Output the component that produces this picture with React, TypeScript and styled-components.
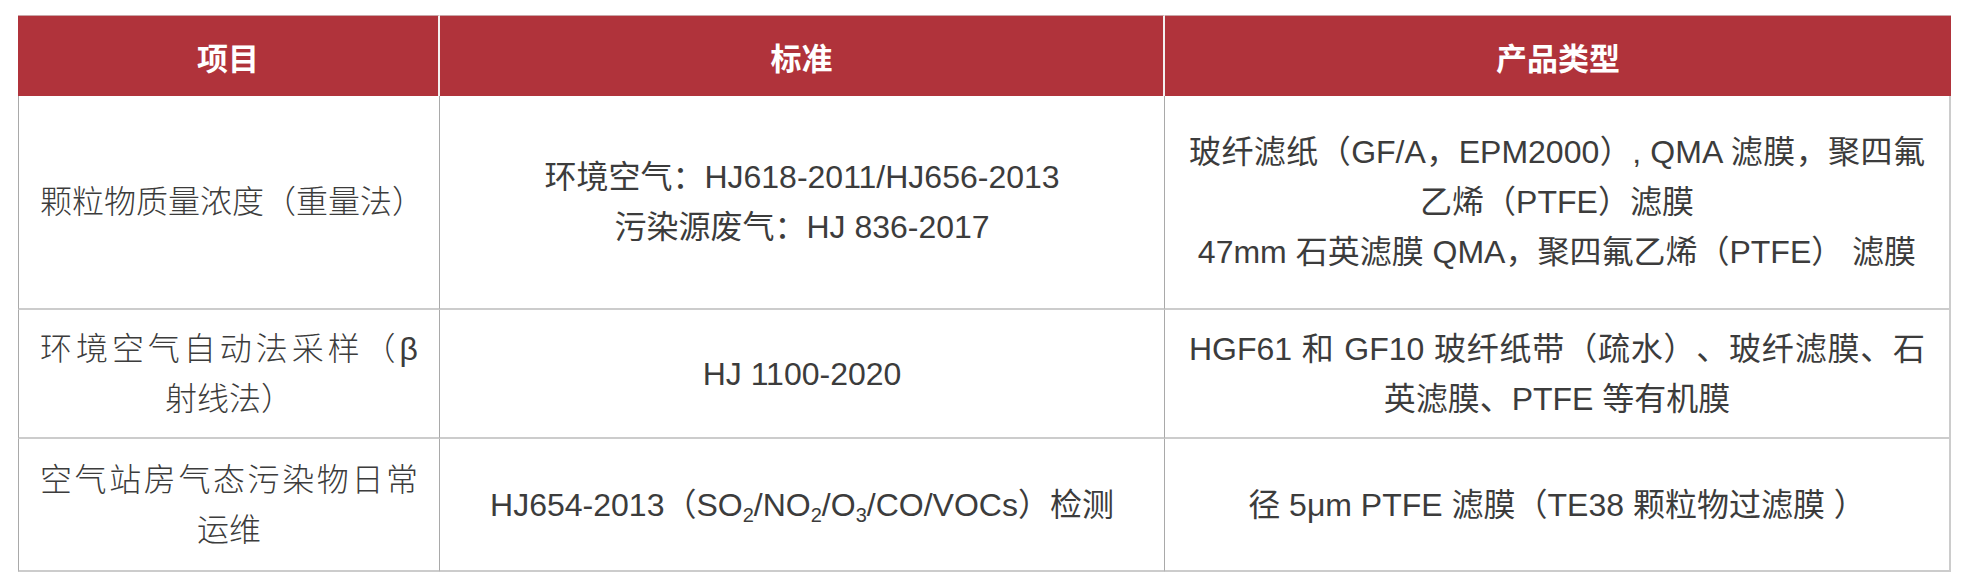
import React from "react";
import styled, { createGlobalStyle, css } from "styled-components";

const GlobalStyle = createGlobalStyle`
  html, body {
    margin: 0;
    padding: 0;
    background: #ffffff;
  }
  body {
    font-family: "Liberation Sans", "Noto Sans CJK SC", sans-serif;
  }
`;

const Table = styled.div`
  display: grid;
  grid-template-columns: 422px 725px 786px;
  grid-template-rows: 81px 214px 129px 133px;
  margin: 15px 0 0 18px;
  width: 1933px;
  font-family: "Liberation Sans", "Noto Sans CJK SC", sans-serif;
  text-spacing-trim: space-all;
`;

const HeadCell = styled.div<{ $last?: boolean }>`
  box-sizing: border-box;
  background: #b0333b;
  color: #ffffff;
  font-weight: 700;
  font-size: 31px;
  display: flex;
  align-items: center;
  justify-content: center;
  border-top: 1px solid #c9a5a7;
  border-right: ${(p) => (p.$last ? "none" : "2px solid #f4f0f0")};
`;

const Cell = styled.div<{ $col: number; $pad: number }>`
  box-sizing: border-box;
  display: flex;
  flex-direction: column;
  justify-content: center;
  padding: 0 ${(p) => p.$pad}px;
  color: #3c3c3c;
  font-size: 32px;
  line-height: 50px;
  border-bottom: 2px solid #cccccc;
  border-right: ${(p) => (p.$col === 3 ? "2px solid #cccccc" : "1px solid #a9a9a9")};
  ${(p) =>
    p.$col === 1 &&
    css`
      border-left: 1px solid #a9a9a9;
    `}
`;

const Line = styled.div<{ $justify?: boolean; $light?: boolean }>`
  white-space: nowrap;
  text-align: center;
  font-weight: ${(p) => (p.$light ? 300 : 400)};
  ${(p) =>
    p.$justify &&
    css`
      text-align: justify;
      text-align-last: justify;
      white-space: normal;
    `}
`;

const Sub = styled.sub`
  font-size: 20px;
  line-height: 0;
  vertical-align: -6px;
`;

export default function App() {
  return (
    <>
      <GlobalStyle />
      <Table>
        <HeadCell>项目</HeadCell>
        <HeadCell>标准</HeadCell>
        <HeadCell $last>产品类型</HeadCell>

        <Cell $col={1} $pad={21}>
          <Line $light>颗粒物质量浓度（重量法）</Line>
        </Cell>
        <Cell $col={2} $pad={24}>
          <Line>环境空气：HJ618-2011/HJ656-2013</Line>
          <Line>污染源废气：HJ 836-2017</Line>
        </Cell>
        <Cell $col={3} $pad={24}>
          <Line $justify>玻纤滤纸（GF/A，EPM2000）, QMA 滤膜，聚四氟</Line>
          <Line>乙烯（PTFE）滤膜</Line>
          <Line>47mm 石英滤膜 QMA，聚四氟乙烯（PTFE） 滤膜</Line>
        </Cell>

        <Cell $col={1} $pad={21}>
          <Line $justify $light>环境空气自动法采样（β</Line>
          <Line $light>射线法）</Line>
        </Cell>
        <Cell $col={2} $pad={24}>
          <Line>HJ 1100-2020</Line>
        </Cell>
        <Cell $col={3} $pad={24}>
          <Line $justify>HGF61 和 GF10 玻纤纸带（疏水）、玻纤滤膜、石</Line>
          <Line>英滤膜、PTFE 等有机膜</Line>
        </Cell>

        <Cell $col={1} $pad={21}>
          <Line $justify $light>空气站房气态污染物日常</Line>
          <Line $light>运维</Line>
        </Cell>
        <Cell $col={2} $pad={24}>
          <Line>
            HJ654-2013（SO<Sub>2</Sub>/NO<Sub>2</Sub>/O<Sub>3</Sub>/CO/VOCs）检测
          </Line>
        </Cell>
        <Cell $col={3} $pad={24}>
          <Line>径 5μm PTFE 滤膜（TE38 颗粒物过滤膜 ）</Line>
        </Cell>
      </Table>
    </>
  );
}
